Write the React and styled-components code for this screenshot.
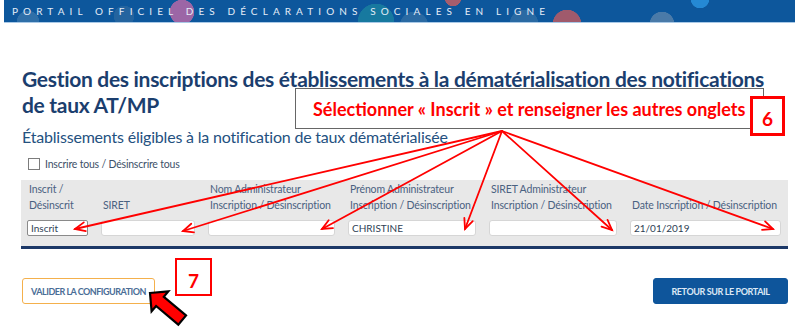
import React from "react";
import styled, { createGlobalStyle } from "styled-components";

const GlobalStyle = createGlobalStyle`
    html, body {
        margin: 0;
        padding: 0;
        background: #fff;
    }
    body {
        font-family: Lato, "Open Sans", sans-serif;
    }
`;

const Page = styled.div`
    position: relative;
    width: 800px;
    height: 327px;
    overflow: hidden;
    background: #fff;
`;

const Banner = styled.header`
    height: 22px;
    margin: 0 5px 0 4px;
    padding-left: 8px;
    display: flex;
    align-items: center;
    border-bottom: 1px solid #a9c9e7;
    background:
        radial-gradient(circle at 24px 22px, #2f6fa8 11px, transparent 11.5px),
        radial-gradient(circle at 120px 16px, #24649f 10px, transparent 10.5px),
        radial-gradient(circle at 178px 12px, #9c66a6 12px, transparent 12.5px),
        radial-gradient(circle at 372px 22px, #17799f 18px, transparent 18.5px),
        radial-gradient(circle at 410px 26px, #2a6aa3 14px, transparent 14.5px),
        radial-gradient(circle at 449px -2px, #a55d6d 8px, transparent 8.5px),
        radial-gradient(circle at 520px 24px, #2a6aa3 14px, transparent 14.5px),
        radial-gradient(circle at 563px 24px, #a05a6c 14px, transparent 14.5px),
        radial-gradient(circle at 658px 24px, #4a7aa8 12px, transparent 12.5px),
        radial-gradient(circle at 696px -1px, #2589d4 9px, transparent 9.5px),
        #0d579c;
`;

const BannerText = styled.span`
    font-size: 10px;
    letter-spacing: 5.1px;
    color: #e4edf8;
    white-space: nowrap;
`;

const Main = styled.main`
    padding: 0 12px 0 22px;
`;

const Title = styled.h1`
    margin: 43px 0 0;
    font-size: 21px;
    line-height: 26px;
    font-weight: 700;
    letter-spacing: -0.3px;
    color: #1b3e6e;
    white-space: nowrap;
`;

const Subtitle = styled.h2`
    margin: 10px 0 0;
    font-size: 16px;
    line-height: 18px;
    font-weight: 400;
    letter-spacing: -0.2px;
    color: #24517f;
`;

const CheckRow = styled.label`
    margin-top: 11px;
    height: 14px;
    padding-left: 6px;
    display: flex;
    align-items: center;
    gap: 5px;
`;

const CheckBox = styled.span`
    width: 12px;
    height: 12px;
    box-sizing: border-box;
    border: 1px solid #7c7c7c;
    background: #fff;
`;

const CheckLabel = styled.span`
    font-size: 10.5px;
    letter-spacing: -0.2px;
    color: #3d5068;
`;

const Panel = styled.section`
    margin: 9px 0 0 -1px;
    padding: 1px 7px 10px 6px;
    display: grid;
    grid-template-columns: 61px 94px 127px 128px 128px 151px;
    column-gap: 13px;
    row-gap: 7px;
    background: #e8e8e8;
    border-bottom: 3px solid #1c3867;
`;

const HeadCell = styled.div`
    align-self: end;
    padding-left: 2px;
    font-size: 10.5px;
    line-height: 16px;
    letter-spacing: -0.15px;
    color: #4a6181;
    white-space: nowrap;
`;

const Field = styled.div`
    position: relative;
    height: 16px;
    box-sizing: border-box;
    padding: 0 3px;
    display: flex;
    align-items: center;
    font-size: 10px;
    color: #2f3f55;
    background: #fff;
    border: 1px solid ${(p) => (p.$select ? "#8a8a8a" : "#d6d6d6")};
    border-radius: ${(p) => (p.$select ? "2px" : "3px")};
`;

const Footer = styled.div`
    margin-top: 29px;
    display: flex;
    justify-content: space-between;
`;

const Button = styled.button`
    height: 26px;
    width: ${(p) => p.$w}px;
    box-sizing: border-box;
    padding: 0;
    font-family: inherit;
    font-size: 9px;
    font-weight: 700;
    letter-spacing: ${(p) => (p.$primary ? "-0.4px" : "-0.5px")};
    border-radius: 3px;
    color: ${(p) => (p.$primary ? "#dce8f5" : "#4a6d96")};
    background: ${(p) => (p.$primary ? "#0e559b" : "#fff")};
    border: 1px solid ${(p) => (p.$primary ? "#0e559b" : "#f4b04c")};
`;

const Callout = styled.div`
    position: absolute;
    left: 295px;
    top: 88px;
    width: 469px;
    height: 41px;
    box-sizing: border-box;
    padding-left: 17px;
    display: flex;
    align-items: center;
    background: #fff;
    border: 1px solid #666;
    font-size: 18px;
    font-weight: 700;
    color: #ff0000;
    white-space: nowrap;
`;

const Step = styled.div`
    position: absolute;
    left: ${(p) => p.$x}px;
    top: ${(p) => p.$y}px;
    width: ${(p) => p.$w}px;
    height: ${(p) => p.$h}px;
    box-sizing: border-box;
    padding-top: ${(p) => p.$pt || 0}px;
    display: flex;
    align-items: center;
    justify-content: center;
    background: #fff;
    border: ${(p) => p.$bw}px solid #ff0000;
    font-size: 19px;
    font-weight: 700;
    color: #ff0000;
`;

const Overlay = styled.svg`
    position: absolute;
    left: 0;
    top: 0;
    pointer-events: none;
`;

const columns = [
    { head: ["Inscrit /", "Désinscrit"], value: "Inscrit", select: true },
    { head: ["SIRET"], value: "" },
    { head: ["Nom Administrateur", "Inscription / Désinscription"], value: "" },
    { head: ["Prénom Administrateur", "Inscription / Désinscription"], value: "CHRISTINE" },
    { head: ["SIRET Administrateur", "Inscription / Désinscription"], value: "" },
    { head: ["Date Inscription / Désinscription"], value: "21/01/2019" },
];

const origin = [502, 131];
const tips = [
    [75, 229],
    [183, 231],
    [322, 229],
    [465, 229],
    [612, 230],
    [773, 229],
];

const headPath = ([x1, y1], [x2, y2], len = 11, ang = 0.42) => {
    const a = Math.atan2(y2 - y1, x2 - x1);
    const p1 = [x2 - len * Math.cos(a - ang), y2 - len * Math.sin(a - ang)];
    const p2 = [x2 - len * Math.cos(a + ang), y2 - len * Math.sin(a + ang)];
    return `M${p1[0]},${p1[1]} L${x2},${y2} L${p2[0]},${p2[1]}`;
};

const Annotations = () => (
    <Overlay width="800" height="327" viewBox="0 0 800 327">
        <g stroke="#ff0000" strokeWidth="1.8" fill="none" strokeLinecap="round">
            {tips.map((t, i) => (
                <g key={i}>
                    <line x1={origin[0]} y1={origin[1]} x2={t[0]} y2={t[1]} />
                    <path d={headPath(origin, t)} />
                </g>
            ))}
        </g>
        <polygon
            transform="translate(150 293) rotate(40)"
            points="0,0 13,-13 13,-6 42,-6 42,6 13,6 13,13"
            fill="#ff0000"
            stroke="#000"
            strokeWidth="2.2"
            strokeLinejoin="miter"
        />
    </Overlay>
);

const App = () => {
    return (
        <Page>
            <GlobalStyle />
            <Banner>
                <BannerText>PORTAIL OFFICIEL DES DÉCLARATIONS SOCIALES EN LIGNE</BannerText>
            </Banner>
            <Main>
                <Title>
                    Gestion des inscriptions des établissements à la dématérialisation des notifications
                    <br />
                    de taux AT/MP
                </Title>
                <Subtitle>Établissements éligibles à la notification de taux dématérialisée</Subtitle>
                <CheckRow>
                    <CheckBox />
                    <CheckLabel>Inscrire tous / Désinscrire tous</CheckLabel>
                </CheckRow>
                <Panel>
                    {columns.map((c, i) => (
                        <HeadCell key={"h" + i}>
                            {c.head.map((line, j) => (
                                <div key={j}>{line}</div>
                            ))}
                        </HeadCell>
                    ))}
                    {columns.map((c, i) => (
                        <Field key={"f" + i} $select={c.select}>
                            {c.value}
                        </Field>
                    ))}
                </Panel>
                <Footer>
                    <Button $w={133}>VALIDER LA CONFIGURATION</Button>
                    <Button $w={135} $primary>
                        RETOUR SUR LE PORTAIL
                    </Button>
                </Footer>
            </Main>
            <Annotations />
            <Callout>Sélectionner « Inscrit » et renseigner les autres onglets</Callout>
            <Step $x={750} $y={96} $w={35} $h={40} $pt={5} $bw={3}>
                6
            </Step>
            <Step $x={175} $y={258} $w={37} $h={38} $pt={6} $bw={2}>
                7
            </Step>
        </Page>
    );
};

export default App;
